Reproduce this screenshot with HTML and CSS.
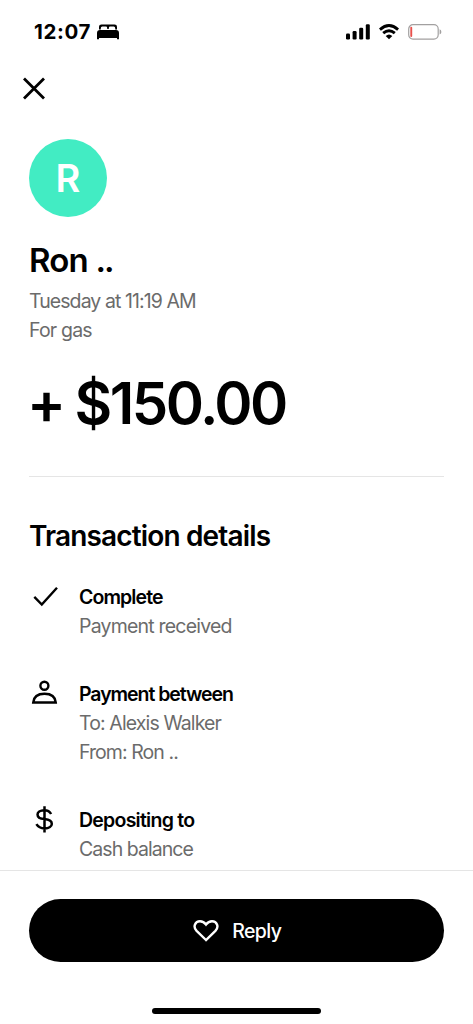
FILE: index.html
```html
<!DOCTYPE html>
<html lang="en">
<head>
<meta charset="utf-8">
<title>Transaction details</title>
<link rel="stylesheet" href="styles.css">
</head>
<body>
<div class="screen">
  <header class="status">
    <div class="clock"><span class="time">12:07</span>
      <svg class="bed" width="22" height="16" viewBox="0 0 22 16"><path d="M2 5.500V2.800Q2 .4 4.400 .4H17.600Q20 .4 20 2.800V5.500H18.200V4.200Q18.200 2.600 16.700 2.600H13.200Q11.800 2.600 11.800 4V5H10.200V4Q10.200 2.600 8.800 2.600H5.300Q3.800 2.600 3.800 4.200V5.500ZM0 15.300V9Q0 6 3 6H19Q22 6 22 9V15.300H20V14H2V15.300Z"/></svg>
    </div>
    <div class="indicators">
      <svg width="24" height="16" viewBox="0 0 24 16"><rect x="0" y="9.500" width="4" height="6" rx="1.200"/><rect x="6.600" y="7" width="4" height="8.500" rx="1.200"/><rect x="13.200" y="3.700" width="4" height="11.800" rx="1.200"/><rect x="19.800" y=".3" width="4" height="15.200" rx="1.200"/></svg>
      <svg width="20" height="16" viewBox="0 0 20 16"><g fill="none" stroke="#000" stroke-width="2.900"><path d="M.9 5.600Q10-2.500 19.100 5.600"/><path d="M4.200 9.200Q10 4.200 15.800 9.200"/></g><path d="M6.700 12Q10 9 13.300 12L10 15.300Z"/></svg>
      <svg width="34" height="16" viewBox="0 0 34 16"><rect x=".7" y=".7" width="29.500" height="14.400" rx="4.300" fill="none" stroke="#a2a0a0" stroke-width="1.200"/><rect x="2.300" y="2.800" width="1.900" height="10.200" rx=".9" fill="#e8504c"/><path d="M31.600 5.200Q33.400 6 33.400 7.900T31.600 10.600Z" fill="#a2a0a0"/></svg>
    </div>
  </header>
  <nav class="nav"><button class="close" aria-label="Close"><svg width="24" height="24" viewBox="0 0 24 24"><path d="M2 2.500L22 22.500M22 2.500L2 22.500" fill="none" stroke="#000" stroke-width="2.800"/></svg></button></nav>
  <main class="content">
    <div class="avatar">R</div>
    <h1 class="name">Ron <span class="dots">..</span></h1>
    <p class="meta date">Tuesday at 11:19 AM</p>
    <p class="meta note">For gas</p>
    <p class="amount"><span class="plus">+</span><span class="figure">$150.00</span></p>
    <h2 class="section">Transaction details</h2>
    <ul class="details">
      <li class="row">
        <svg class="icon" width="30" height="29" viewBox="0 0 30 29"><path d="M5.300 13.900L12.800 21.600L28 4.800" fill="none" stroke="#000" stroke-width="2.400"/></svg>
        <div><h3 class="label l-complete">Complete</h3><p class="value v-received">Payment received</p></div>
      </li>
      <li class="row">
        <svg class="icon" width="30" height="29" viewBox="0 0 30 29"><g fill="none" stroke="#000" stroke-width="2.400"><circle cx="15.400" cy="5.700" r="4"/><path d="M4.200 22.500Q5 13.700 15.500 13.700T26.800 22.500Z"/></g></svg>
        <div><h3 class="label l-between">Payment between</h3><p class="value v-to">To: Alexis Walker</p><p class="value v-from">From: Ron ..</p></div>
      </li>
      <li class="row">
        <svg class="icon" width="30" height="29" viewBox="0 0 30 29"><path d="M22.100 8Q20 4.200 15.500 4.200C6.200 4.200 6.200 12.400 15.500 13.100C25.500 13.900 25 22.400 15.500 22.400Q10 22.400 7.400 18.200M15.500 .2V26.400" fill="none" stroke="#000" stroke-width="2.500"/></svg>
        <div><h3 class="label l-deposit">Depositing to</h3><p class="value v-cash">Cash balance</p></div>
      </li>
    </ul>
  </main>
  <footer class="footer">
    <button class="reply"><svg width="26" height="23" viewBox="0 0 26 23"><path d="M13 21L3.600 11.900C-.5 7.500 2.300 2.300 7 2.300Q10.500 2.300 13 5.600Q15.500 2.300 19 2.300C23.700 2.300 26.500 7.500 22.400 11.900Z" fill="none" stroke="#fff" stroke-width="2.400"/></svg><span class="reply-text">Reply</span></button>
    <div class="home"></div>
  </footer>
</div>
</body>
</html>
```

FILE: styles.css
```css
* { box-sizing: border-box; margin: 0; padding: 0; }
body { background: #fff; color: #000; font-family: Inter, "Liberation Sans", sans-serif; }
button { border: 0; background: none; font: inherit; }
svg { display: block; flex: none; }
.screen { display: flex; flex-direction: column; width: 473px; height: 1024px; overflow: hidden; }
.status { display: flex; justify-content: space-between; align-items: center; flex: none; height: 63px; padding: 0 31px 0 34px; }
.clock { display: flex; align-items: center; gap: 6px; }
.time { font-size: 20.5px; font-weight: 700; line-height: 24px; letter-spacing: .6px; }
.indicators { display: flex; gap: 9px; }
.nav { flex: none; height: 76px; padding: 13px 22px; }
.close { display: block; width: 24px; height: 24px; }
.content { flex: 1; min-height: 0; overflow: hidden; padding: 0 29px; }
.avatar { width: 78px; height: 78px; border-radius: 50%; background: #42ecc3; color: #fff; font-size: 38px; font-weight: 600; line-height: 78px; text-align: center; }
.name { margin-top: 23px; height: 47px; font-size: 33px; font-weight: 600; line-height: 40px; letter-spacing: -.8px; }
.dots { letter-spacing: -2px; }
.meta, .value { color: #6b6b6b; font-size: 19.5px; font-weight: 400; line-height: 29px; letter-spacing: -.8px; white-space: nowrap; }
.date { letter-spacing: -.93px; }
.amount { display: flex; gap: 11px; height: 132px; padding-top: 23px; border-bottom: 1px solid #e5e5e5; font-size: 58px; font-weight: 600; line-height: 70px; letter-spacing: -2.5px; white-space: nowrap; }
.plus { margin-left: -2px; }
.section { margin-top: 41px; font-size: 28px; font-weight: 600; line-height: 36px; letter-spacing: -.85px; white-space: nowrap; }
.details { display: grid; gap: 39px; margin-top: 29px; list-style: none; }
.row { display: flex; gap: 20px; }
.label { font-size: 19.5px; font-weight: 600; line-height: 29px; letter-spacing: -.9px; white-space: nowrap; }
.l-between { letter-spacing: -1.05px; }
.l-deposit { letter-spacing: -.75px; }
.v-to { letter-spacing: -.88px; }
.v-from { letter-spacing: -.93px; }
.v-cash { letter-spacing: -.95px; }
.footer { flex: none; height: 154px; padding: 28px 29px 0; border-top: 1px solid #e5e5e5; }
.reply { display: flex; align-items: center; justify-content: center; gap: 13.500px; width: 415px; height: 63px; border-radius: 32px; background: #000; color: #fff; font-size: 19.5px; font-weight: 500; letter-spacing: -.6px; }
.reply svg { margin-left: 1px; }
.reply-text { padding-top: 1px; }
.home { width: 169px; height: 6px; margin: 46px auto 0; border-radius: 3px; background: #000; }
```
